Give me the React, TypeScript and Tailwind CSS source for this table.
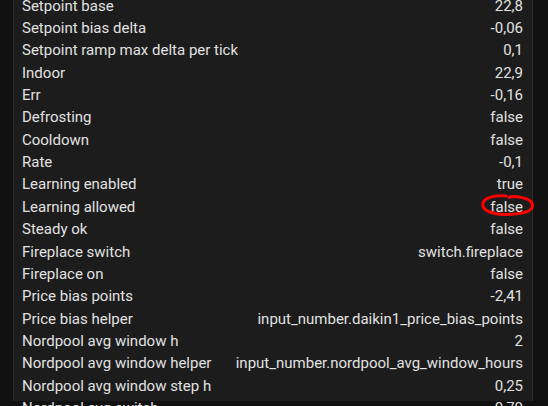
const rows: [string, string][] = [
  ["Setpoint base", "22,8"],
  ["Setpoint bias delta", "-0,06"],
  ["Setpoint ramp max delta per tick", "0,1"],
  ["Indoor", "22,9"],
  ["Err", "-0,16"],
  ["Defrosting", "false"],
  ["Cooldown", "false"],
  ["Rate", "-0,1"],
  ["Learning enabled", "true"],
  ["Learning allowed", "false"],
  ["Steady ok", "false"],
  ["Fireplace switch", "switch.fireplace"],
  ["Fireplace on", "false"],
  ["Price bias points", "-2,41"],
  ["Price bias helper", "input_number.daikin1_price_bias_points"],
  ["Nordpool avg window h", "2"],
  ["Nordpool avg window helper", "input_number.nordpool_avg_window_hours"],
  ["Nordpool avg window step h", "0,25"],
  ["Nordpool avg switch", "0,70"],
];

function Marker() {
  // hand-drawn red ring around the value
  return (
    <svg
      className="absolute right-[-13px] top-[-4px] pointer-events-none"
      width="56"
      height="26"
      viewBox="0 0 56 26"
      fill="none"
    >
      <path
        d="M26 4 C16 3 5 5 3 11 C1.5 17.5 10 22.5 25 22.5 C40 22.5 52 20 52.5 14 C53 8 44 5 33 4.5 C31 4.5 29.5 5 29 5.5"
        stroke="#ff0000"
        strokeWidth="3"
        strokeLinecap="round"
      />
    </svg>
  );
}

export default function App() {
  return (
    <div className="w-[548px] h-[406px] overflow-hidden bg-[#111111] font-['Roboto',sans-serif] text-[15px] text-[#e1e1e1]">
      <div className="ml-[13px] w-[520px] h-full bg-[#1c1c1c] border-x border-[#2c2c2c]">
        <div className="mt-[-5.2px] pl-[8px] pr-[9px]">
          {rows.map(([label, value]) => (
            <div key={label} className="h-[22.35px] flex items-center justify-between gap-4">
              <span className="whitespace-nowrap">{label}</span>
              <span className="relative whitespace-nowrap">
                {value}
                {label === "Learning allowed" && <Marker />}
              </span>
            </div>
          ))}
        </div>
      </div>
    </div>
  );
}
